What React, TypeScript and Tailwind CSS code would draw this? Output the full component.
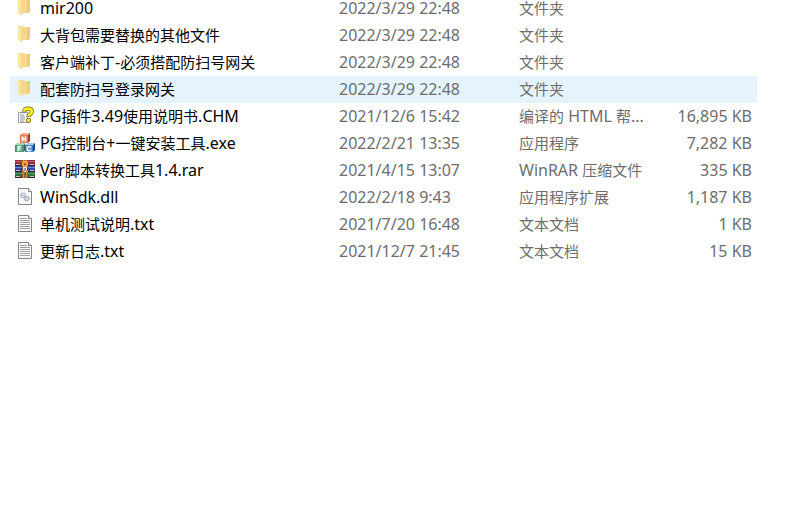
import type { ReactNode } from "react";
import clsx from "clsx";

type FileKind = "folder" | "chm" | "exe" | "rar" | "dll" | "txt";

interface FileRow {
  name: string;
  date: string;
  type: string;
  size?: string;
  kind: FileKind;
}

const files: FileRow[] = [
  { name: "mir200", date: "2022/3/29 22:48", type: "文件夹", kind: "folder" },
  { name: "大背包需要替换的其他文件", date: "2022/3/29 22:48", type: "文件夹", kind: "folder" },
  { name: "客户端补丁-必须搭配防扫号网关", date: "2022/3/29 22:48", type: "文件夹", kind: "folder" },
  { name: "配套防扫号登录网关", date: "2022/3/29 22:48", type: "文件夹", kind: "folder" },
  { name: "PG插件3.49使用说明书.CHM", date: "2021/12/6 15:42", type: "编译的 HTML 帮...", size: "16,895 KB", kind: "chm" },
  { name: "PG控制台+一键安装工具.exe", date: "2022/2/21 13:35", type: "应用程序", size: "7,282 KB", kind: "exe" },
  { name: "Ver脚本转换工具1.4.rar", date: "2021/4/15 13:07", type: "WinRAR 压缩文件", size: "335 KB", kind: "rar" },
  { name: "WinSdk.dll", date: "2022/2/18 9:43", type: "应用程序扩展", size: "1,187 KB", kind: "dll" },
  { name: "单机测试说明.txt", date: "2021/7/20 16:48", type: "文本文档", size: "1 KB", kind: "txt" },
  { name: "更新日志.txt", date: "2021/12/7 21:45", type: "文本文档", size: "15 KB", kind: "txt" },
];

const selected = "配套防扫号登录网关";

function FolderIcon() {
  return (
    <>
      <path d="M3 1h5l1 1h6v11l-1 1v1H7v2l-4-2z" fill="#f5d888" />
      <path d="M12 2h3v11l-1 1v1h-2z" fill="#efcd78" />
      <path d="M3 1l4 2v14l-4-2z" fill="#fae3a4" />
      <path d="M7 3v14" stroke="#edcb74" strokeWidth=".6" />
    </>
  );
}

function Page({ children }: { children: ReactNode }) {
  return (
    <>
      <path d="M3.5 1.5h10l3 3v13h-13z" fill="#fafafa" stroke="#858585" />
      <path d="M13.5 1.5v3h3" fill="#fff" stroke="#858585" />
      {children}
    </>
  );
}

function ChmIcon() {
  return (
    <>
      <path d="M3.5 6.5h9v10h-9z" fill="#f6f6f8" stroke="#9a9ba6" />
      <path d="M5 9h4M5 11h5M5 13h5M5 15h4" stroke="#8a8c9c" strokeWidth=".9" />
      <path
        d="M9.4 6.2C9 3.4 10.6 2.6 13 2.6s3.8 1 3.8 3.1c0 2.4-3.4 2.5-3.4 5.3"
        fill="none"
        stroke="#5f5c12"
        strokeWidth="4.2"
      />
      <path
        d="M9.4 5.6C9.2 3.4 10.6 2.6 13 2.6s3.8 1 3.8 3.1c0 2.4-3.4 2.5-3.4 4.8"
        fill="none"
        stroke="#f8ee22"
        strokeWidth="2.9"
      />
      <rect x="11.4" y="12.4" width="4.2" height="4" rx="1.6" fill="#f8ee22" stroke="#5f5c12" strokeWidth=".8" />
    </>
  );
}

function ExeIcon() {
  return (
    <>
      <path d="M5 2l2-2h8l-2 2z" fill="#f3b094" />
      <path d="M13 2l2-2v8l-2 2z" fill="#a63c25" />
      <path d="M5 2h8v8H5z" fill="#df7352" />
      <path d="M0 12l2-2h8l-1 2z" fill="#a5d9bb" />
      <path d="M0 12h9v7H0z" fill="#3f9270" />
      <path d="M9 12l1-2v7l-1 2z" fill="#28664b" />
      <path d="M10 12l2-2h8l-2 2z" fill="#a5cbed" />
      <path d="M10 12h8v7h-8z" fill="#3a7fbd" />
      <path d="M18 12l2-2v7l-2 2z" fill="#1d4a78" />
      <path d="M6 3h6v6H6zM1.5 12.5h6v6h-6zM11 12.5h6v6h-6z" fill="#fff" opacity=".25" />
      <path
        d="M7.5 3.6v4.8M10.5 3.6v4.8M7.5 6h3M3.2 18.2v-4.6h3M3.2 15.8h2.6M16 14.2c-2-1.2-3.8-.4-3.8 1.6s1.8 2.6 3.8 1.4"
        fill="none"
        stroke="#fff"
        strokeWidth="1.3"
      />
    </>
  );
}

function RarIcon() {
  return (
    <>
      <path d="M0 0h20v6H0z" fill="#8f2f42" />
      <path d="M0 1h20v1H0z" fill="#c25b68" />
      <path d="M0 6h20v6H0z" fill="#37469f" />
      <path d="M0 7h20v1H0z" fill="#6f82d6" />
      <path d="M0 12h20v6H0z" fill="#2a7040" />
      <path d="M0 13h20v1H0z" fill="#58a765" />
      <path d="M0 5h20v1H0zM0 11h20v1H0zM0 17h20v1H0z" fill="#35202c" />
      <path d="M1 4h4v1H1zM15 4h4v1h-4zM1 10h4v1H1zM15 10h4v1h-4zM1 16h4v1H1zM15 16h4v1h-4z" fill="#c9bfb8" />
      <path d="M7 0h6v18H7z" fill="#9c5c2c" />
      <path d="M8 0h1v18H8zM11 0h1v18h-1z" fill="#cf8c44" />
      <circle cx="10" cy="4" r="3.2" fill="#f3a43c" />
      <circle cx="10" cy="4.4" r="1.2" fill="#a44c22" />
      <path d="M7 7h6v5H7z" fill="#f4e6cf" />
      <path d="M7.5 7v3l1 2M12.5 7v3l-1 2M10 8v3" fill="none" stroke="#5c3f42" />
    </>
  );
}

function DllIcon() {
  return (
    <Page>
      <circle cx="8" cy="8.5" r="2.3" fill="#eef2f5" stroke="#8e9eab" strokeWidth="1.2" strokeDasharray="1.3 .5" />
      <circle cx="8" cy="8.5" r=".8" fill="#8e9eab" />
      <circle cx="11.8" cy="11.6" r="2.3" fill="#eef2f5" stroke="#8e9eab" strokeWidth="1.2" strokeDasharray="1.3 .5" />
      <circle cx="11.8" cy="11.6" r=".8" fill="#8e9eab" />
    </Page>
  );
}

function TxtIcon() {
  return (
    <Page>
      <path
        d="M5 4.5h7M5 6.5h10M5 8.5h10M5 10.5h10M5 12.5h10M5 14.5h10"
        stroke="#a0a0a0"
      />
    </Page>
  );
}

const icons = {
  folder: FolderIcon,
  chm: ChmIcon,
  exe: ExeIcon,
  rar: RarIcon,
  dll: DllIcon,
  txt: TxtIcon,
};

// Han characters are set one pixel smaller than the latin text around them
function Label({ text }: { text: string }) {
  return (
    <>
      {text.split(/([\u4e00-\u9fff]+)/).map((part, index) =>
        index % 2 ? (
          <span key={index} className="text-[15px]">
            {part}
          </span>
        ) : (
          part
        )
      )}
    </>
  );
}

export default function App() {
  return (
    <main className="min-h-screen overflow-hidden bg-white pl-[10px] pr-[47px] font-['Noto_Sans','Noto_Sans_CJK_SC',sans-serif] text-base leading-[22px] text-[#6d6d6d]">
      {/* the list is scrolled a little, so the first row is cut at the top */}
      <table className="-mt-[5px] w-full table-fixed whitespace-nowrap">
        <colgroup>
          <col />
          <col className="w-[180px]" />
          <col className="w-[140px]" />
          <col className="w-[104px]" />
        </colgroup>
        <tbody>
          {files.map((file) => {
            const Icon = icons[file.kind];
            return (
              <tr
                key={file.name}
                className={clsx("h-[27px]", file.name === selected ? "bg-[#e5f3ff]" : "hover:bg-[#e5f3ff]")}
              >
                <td className="p-0 pb-[2px] pl-[5px] text-black">
                  <div className="flex items-center gap-[5px]">
                    <svg viewBox="0 0 20 20" className="size-5 shrink-0" aria-hidden="true">
                      <Icon />
                    </svg>
                    <span className="truncate">
                      <Label text={file.name} />
                    </span>
                  </div>
                </td>
                <td className="p-0 pb-[2px] pl-[6px]">{file.date}</td>
                <td className="p-0 pb-[2px] pl-[6px]">
                  <Label text={file.type} />
                </td>
                <td className="p-0 pb-[2px] pr-[5px] text-right">{file.size}</td>
              </tr>
            );
          })}
        </tbody>
      </table>
    </main>
  );
}
